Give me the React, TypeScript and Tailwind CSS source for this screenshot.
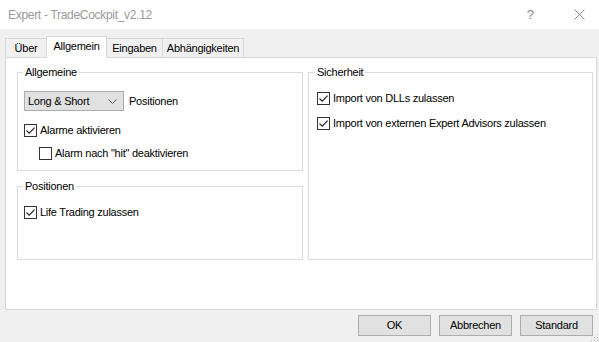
import React from 'react';

function Check({ checked }: { checked?: boolean }) {
  return (
    <span className="w-[13px] h-[13px] border border-[#333333] bg-white flex items-center justify-center shrink-0">
      {checked && (
        <svg width="11" height="11" viewBox="0 0 11 11">
          <path d="M1.5 5.5 L4.2 8.2 L9.6 2.6" stroke="#222" strokeWidth="1.1" fill="none" />
        </svg>
      )}
    </span>
  );
}

function CheckRow({ label, checked, className = '' }: { label: string; checked?: boolean; className?: string }) {
  return (
    <div className={`flex items-center gap-[3px] h-[15px] ${className}`}>
      <Check checked={checked} />
      <span className="leading-[15px]">{label}</span>
    </div>
  );
}

function Group({ title, className = '', labelLeft = 'left-[5px]', children }: { title: string; className?: string; labelLeft?: string; children: React.ReactNode }) {
  return (
    <div className={`relative border border-[#dcdcdc] ${className}`}>
      <span className={`absolute -top-[8px] ${labelLeft} bg-white px-[2px] leading-[15px]`}>{title}</span>
      {children}
    </div>
  );
}

const tabs = [
  { name: 'Über', w: 'w-[42px]' },
  { name: 'Allgemein', w: 'w-[61px]', active: true },
  { name: 'Eingaben', w: 'w-[57px]' },
  { name: 'Abhängigkeiten', w: 'w-[82px]' },
];

export default function App() {
  return (
    <div className="w-[599px] h-[342px] bg-[#f0f0f0] text-black text-[11px] tracking-[-0.25px] font-['Liberation_Sans',Arial,sans-serif] flex flex-col overflow-hidden relative">
      {/* title bar */}
      <div className="h-[29px] bg-white flex items-center shrink-0">
        <span className="ml-[8px] text-[12px] tracking-[-0.3px] text-[#999999]">Expert - TradeCockpit_v2.12</span>
        <span className="ml-auto mr-[40px] text-[13px] text-[#8a8a8a] tracking-normal">?</span>
        <svg width="11" height="11" viewBox="0 0 11 11" className="mr-[14px]">
          <path d="M0.5 0.5 L10.5 10.5 M10.5 0.5 L0.5 10.5" stroke="#8a8a8a" strokeWidth="1" />
        </svg>
      </div>

      {/* tabs */}
      <div className="flex items-end pl-[5px] mt-[7px] h-[21px] shrink-0">
        {tabs.map((t, i) => (
          <div
            key={t.name}
            className={`${t.w} ${i > 0 ? '-ml-px' : ''} border border-b-0 border-[#d9d9d9] flex items-center justify-center ${
              t.active ? 'h-[22px] -mb-px bg-white relative z-10 pb-[2px]' : 'h-[19px] bg-[#f0f0f0]'
            }`}
          >
            {t.name}
          </div>
        ))}
      </div>

      {/* tab page */}
      <div className="ml-[5px] w-[592px] h-[253px] bg-white border border-[#d9d9d9] flex pl-[11px] pr-[3px] pt-[14px] gap-[5px] shrink-0">
        <div className="w-[286px] flex flex-col gap-[15px]">
          <Group title="Allgemeine" className="h-[99px] pl-[6px] pt-[18px]">
            <div className="flex items-center gap-[5px]">
              <div className="w-[100px] h-[20px] bg-[#e1e1e1] border border-[#adadad] flex items-center pl-[3px] pr-[6px]">
                <span>Long &amp; Short</span>
                <svg width="9" height="5" viewBox="0 0 9 5" className="ml-auto">
                  <path d="M0.5 0.5 L4.5 4.5 L8.5 0.5" stroke="#555" strokeWidth="1" fill="none" />
                </svg>
              </div>
              <span>Positionen</span>
            </div>
            <CheckRow label="Alarme aktivieren" checked className="mt-[12px]" />
            <CheckRow label={'Alarm nach "hit" deaktivieren'} className="mt-[8px] ml-[15px]" />
          </Group>
          <Group title="Positionen" className="h-[74px] pl-[6px] pt-[18px]">
            <CheckRow label="Life Trading zulassen" checked />
          </Group>
        </div>
        <div className="w-[285px]">
          <Group title="Sicherheit" labelLeft="left-[6px]" className="h-[188px] pl-[8px] pt-[18px]">
            <CheckRow label="Import von DLLs zulassen" checked />
            <CheckRow label="Import von externen Expert Advisors zulassen" checked className="mt-[10px]" />
          </Group>
        </div>
      </div>

      {/* buttons */}
      <div className="flex justify-end gap-[8px] pr-[6px] mt-[5px]">
        {['OK', 'Abbrechen', 'Standard'].map(b => (
          <button key={b} className="w-[73px] h-[21px] bg-[#e1e1e1] border border-[#adadad] flex items-center justify-center">
            {b}
          </button>
        ))}
      </div>

      {/* resize grip */}
      <svg width="10" height="10" viewBox="0 0 10 10" className="absolute right-0 bottom-0">
        <rect x="8" y="2" width="1" height="1" fill="#bdbdbd" />
        <rect x="5" y="5" width="1" height="1" fill="#bdbdbd" />
        <rect x="8" y="5" width="1" height="1" fill="#bdbdbd" />
        <rect x="2" y="8" width="1" height="1" fill="#bdbdbd" />
        <rect x="5" y="8" width="1" height="1" fill="#bdbdbd" />
        <rect x="8" y="8" width="1" height="1" fill="#bdbdbd" />
      </svg>
    </div>
  );
}
